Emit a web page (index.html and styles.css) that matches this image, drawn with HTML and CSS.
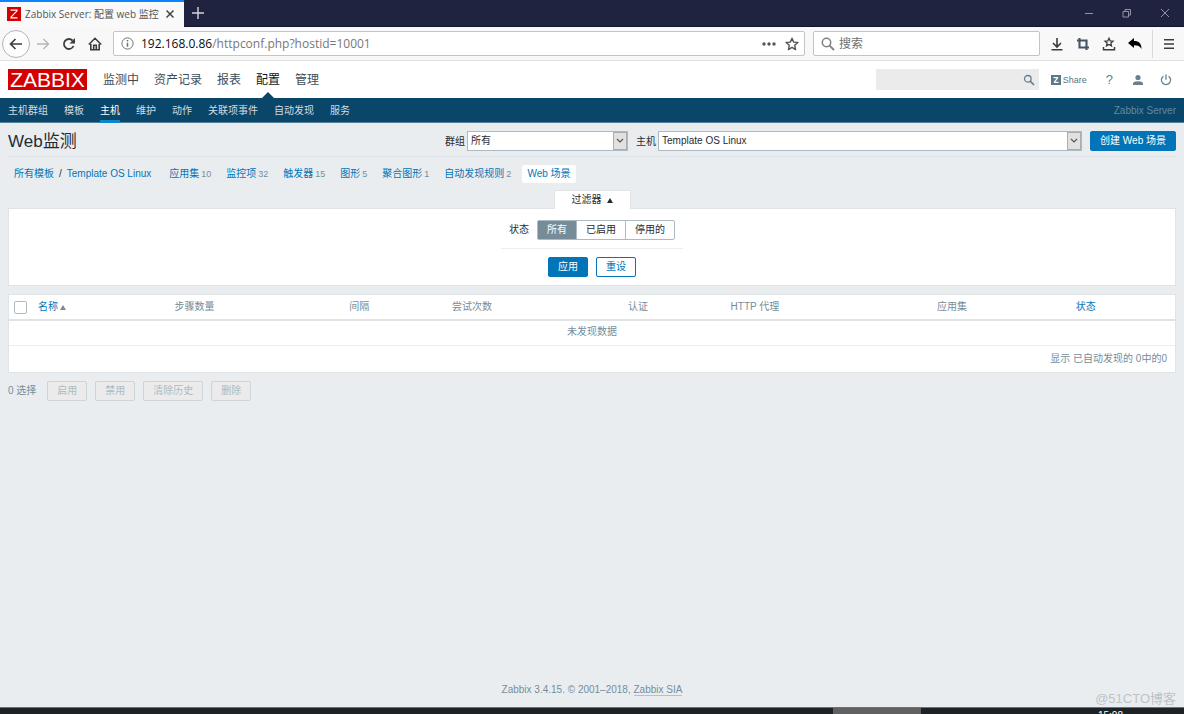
FILE: index.html
```html
<!DOCTYPE html>
<html lang="zh-CN">
<head>
<meta charset="utf-8">
<title>Zabbix Server: 配置 web 监控</title>
<link rel="stylesheet" href="styles.css">
</head>
<body>
<div class="tabstrip">
  <div class="tab">
    <svg class="favicon" width="14" height="14" viewBox="0 0 14 14"><rect width="14" height="14" fill="#d40000"/><path d="M3.500 3.200h6.500v.6L4 10.200v.6h6.500" fill="none" stroke="#fff" stroke-width="1.200"/></svg>
    <span class="tab-title">Zabbix Server: 配置 web 监控</span>
    <button class="icon-btn" aria-label="关闭标签页"><svg width="10" height="10" viewBox="0 0 10 10"><path d="M1.500 1.500l7 7M8.500 1.500l-7 7" stroke="#444" stroke-width="1.500"/></svg></button>
  </div>
  <button class="icon-btn newtab" aria-label="新标签页"><svg width="12" height="12" viewBox="0 0 12 12"><path d="M6 0v12M0 6h12" stroke="#d4d4dc" stroke-width="1.400"/></svg></button>
  <div class="window-controls">
    <button class="icon-btn" aria-label="最小化"><svg width="10" height="10" viewBox="0 0 10 10"><path d="M1 5.500h8" stroke="#9293a4"/></svg></button>
    <button class="icon-btn" aria-label="还原"><svg width="10" height="10" viewBox="0 0 10 10"><path d="M1 3.500h5.500V9H1zM3 3.500v-2h5.500V7h-2" fill="none" stroke="#9293a4"/></svg></button>
    <button class="icon-btn" aria-label="关闭"><svg width="10" height="10" viewBox="0 0 10 10"><path d="M1 1l8 8M9 1L1 9" stroke="#9293a4"/></svg></button>
  </div>
</div>

<div class="toolbar">
  <button class="icon-btn back" aria-label="后退"><svg width="14" height="14" viewBox="0 0 14 14"><path d="M13 7H1.500M6.500 2l-5 5 5 5" fill="none" stroke="#3c3c3e" stroke-width="1.600"/></svg></button>
  <button class="icon-btn tool" aria-label="前进"><svg width="14" height="14" viewBox="0 0 14 14"><path d="M1 7h11.500M7.500 2l5 5-5 5" fill="none" stroke="#b5b5b7" stroke-width="1.400"/></svg></button>
  <button class="icon-btn tool" aria-label="刷新"><svg width="14" height="14" viewBox="0 0 14 14"><path d="M11.500 9A5 5 0 1 1 10.500 3.500" fill="none" stroke="#3c3c3e" stroke-width="1.800"/><path d="M13 1v5.500H7.500z" fill="#3c3c3e"/></svg></button>
  <button class="icon-btn tool" aria-label="主页"><svg width="14" height="14" viewBox="0 0 14 14"><path d="M.8 7.500L7 1.300l6.200 6.200M2.800 7v5.800h8.400V7M5.700 12.500V8.300h2.600v4.200" fill="none" stroke="#3c3c3e" stroke-width="1.600"/></svg></button>
  <div class="urlbar">
    <svg width="13" height="13" viewBox="0 0 13 13"><circle cx="6.500" cy="6.500" r="5.600" fill="none" stroke="#6f6f71"/><path d="M6.500 5.700v4M6.500 3v1.500" stroke="#6f6f71" stroke-width="1.500"/></svg>
    <span class="url"><b>192.168.0.86</b>/httpconf.php?hostid=10001</span>
    <button class="icon-btn" aria-label="页面操作"><svg width="14" height="14" viewBox="0 0 14 14"><g fill="#555"><circle cx="2" cy="7" r="1.700"/><circle cx="7" cy="7" r="1.700"/><circle cx="12" cy="7" r="1.700"/></g></svg></button>
    <button class="icon-btn" aria-label="收藏"><svg width="14" height="14" viewBox="0 0 14 14"><path d="M7 1.200l1.700 3.900 4.200.4-3.200 2.800.9 4.300L7 10.400l-3.600 2.200.9-4.300L1.100 5.500l4.200-.4z" fill="none" stroke="#555" stroke-width="1.400" stroke-linejoin="round"/></svg></button>
  </div>
  <div class="browser-search">
    <svg width="14" height="14" viewBox="0 0 14 14"><circle cx="5.500" cy="5.500" r="4.200" fill="none" stroke="#808082" stroke-width="1.500"/><path d="M8.600 8.600L13 13" stroke="#808082" stroke-width="1.800"/></svg>
    <input type="text" placeholder="搜索" aria-label="搜索">
  </div>
  <div class="toolbar-icons">
    <button class="icon-btn" aria-label="下载"><svg width="14" height="14" viewBox="0 0 14 14"><path d="M7 1v9M3 6l4 4 4-4M1.500 12.800h11" fill="none" stroke="#3c3c3e" stroke-width="1.600"/></svg></button>
    <button class="icon-btn" aria-label="截图"><svg width="14" height="14" viewBox="0 0 14 14"><path d="M1 3.500h9.500V13M3.500 1v9.500H13" fill="none" stroke="#465566" stroke-width="2.100"/></svg></button>
    <button class="icon-btn" aria-label="书签"><svg width="14" height="14" viewBox="0 0 14 14"><path d="M7 1.300l1.200 2.600 2.800.3-2.100 1.900.6 2.800L7 7.500 4.500 8.900l.6-2.800L3 4.200l2.800-.3z" fill="none" stroke="#3c3c3e" stroke-width="1.300"/><path d="M1.500 10v2.800h11V10" fill="none" stroke="#3c3c3e" stroke-width="1.500"/></svg></button>
    <button class="icon-btn" aria-label="撤销"><svg width="14" height="14" viewBox="0 0 14 14"><path d="M0 6l6-5v3c5 0 7.500 2.500 7.500 8C12 9.200 10 8.200 6 8.200V11z" fill="#000"/></svg></button>
    <button class="icon-btn menu" aria-label="菜单"><svg width="12" height="12" viewBox="0 0 12 12"><path d="M1 1.800h10M1 6h10M1 10.200h10" stroke="#3c3c3e" stroke-width="1.500"/></svg></button>
  </div>
</div>

<header class="header">
  <a class="logo" href="#">ZABBIX</a>
  <nav class="main-nav">
    <a href="#">监测中</a><a href="#">资产记录</a><a href="#">报表</a><a href="#" class="active">配置</a><a href="#">管理</a>
  </nav>
  <div class="site-search">
    <input type="text" aria-label="站内搜索">
    <button class="icon-btn" aria-label="执行搜索"><svg width="12" height="12" viewBox="0 0 12 12"><circle cx="4.800" cy="4.800" r="3.300" fill="none" stroke="#668090" stroke-width="1.300"/><path d="M7.200 7.200L11 11" stroke="#668090" stroke-width="1.700"/></svg></button>
  </div>
  <a class="share" href="#"><svg width="10" height="10" viewBox="0 0 10 10"><rect width="10" height="10" fill="#5c7989"/><path d="M2.500 2.600H7L3 7.400h4.500" fill="none" stroke="#fff" stroke-width="1.100" stroke-linejoin="bevel"/></svg>Share</a>
  <a class="help" href="#">?</a>
  <a class="user" href="#" aria-label="用户"><svg width="12" height="12" viewBox="0 0 12 12"><circle cx="6" cy="3.500" r="2.600" fill="#668090"/><path d="M1 11V9.500C1 8 3 7.200 6 7.200s5 .8 5 2.300V11z" fill="#668090"/></svg></a>
  <a class="power" href="#" aria-label="退出"><svg width="12" height="12" viewBox="0 0 12 12"><path d="M3.400 2.200a4.600 4.600 0 1 0 5.200 0M6 .5v5.300" fill="none" stroke="#668090" stroke-width="1.300"/></svg></a>
</header>

<nav class="sub-nav">
  <a href="#">主机群组</a><a href="#">模板</a><a href="#" class="active">主机</a><a href="#">维护</a><a href="#">动作</a><a href="#">关联项事件</a><a href="#">自动发现</a><a href="#">服务</a>
  <span class="server">Zabbix Server</span>
</nav>

<main class="main">
  <div class="title-row">
    <h1>Web监测</h1>
    <label for="group">群组</label>
    <div class="select group"><select id="group"><option>所有</option></select><span class="arrow"><svg width="8" height="6" viewBox="0 0 8 6"><path d="M1 1l3 3 3-3" fill="none" stroke="#555" stroke-width="1.200"/></svg></span></div>
    <label for="host">主机</label>
    <div class="select host"><select id="host"><option>Template OS Linux</option></select><span class="arrow"><svg width="8" height="6" viewBox="0 0 8 6"><path d="M1 1l3 3 3-3" fill="none" stroke="#555" stroke-width="1.200"/></svg></span></div>
    <button class="btn primary create">创建 Web 场景</button>
  </div>

  <div class="crumbs">
    <div class="path"><a href="#">所有模板</a><span>/</span><a href="#">Template OS Linux</a></div>
    <div><a href="#">应用集</a><sup>10</sup></div>
    <div><a href="#">监控项</a><sup>32</sup></div>
    <div><a href="#">触发器</a><sup>15</sup></div>
    <div><a href="#">图形</a><sup>5</sup></div>
    <div><a href="#">聚合图形</a><sup>1</sup></div>
    <div><a href="#">自动发现规则</a><sup>2</sup></div>
    <a class="current" href="#">Web 场景</a>
  </div>

  <button class="filter-tab">过滤器<svg width="6" height="5" viewBox="0 0 6 5"><path d="M3 0l3 5H0z" fill="#1f2c33"/></svg></button>
  <form class="filter">
    <div class="filter-row" role="group" aria-label="状态">
      <span>状态</span>
      <div class="segments">
        <label><input type="radio" name="status" checked>所有</label><label><input type="radio" name="status">已启用</label><label><input type="radio" name="status">停用的</label>
      </div>
    </div>
    <div class="filter-actions">
      <button type="button" class="btn primary">应用</button>
      <button type="button" class="btn">重设</button>
    </div>
  </form>

  <table class="list">
    <colgroup><col class="c-check"><col class="c-name"><col class="c-steps"><col class="c-interval"><col class="c-attempts"><col class="c-auth"><col class="c-proxy"><col class="c-app"><col></colgroup>
    <thead><tr>
      <th><input type="checkbox" aria-label="全选"></th>
      <th><a href="#">名称<svg width="6" height="5" viewBox="0 0 6 5"><path d="M3 0l3 5H0z" fill="#768d99"/></svg></a></th>
      <th>步骤数量</th><th>间隔</th><th>尝试次数</th><th>认证</th><th>HTTP 代理</th><th>应用集</th><th><a href="#">状态</a></th>
    </tr></thead>
    <tbody>
      <tr><td class="empty" colspan="9">未发现数据</td></tr>
      <tr><td class="total" colspan="9">显示 已自动发现的 0中的0</td></tr>
    </tbody>
  </table>

  <div class="bulk">
    <span>0 选择</span>
    <button class="btn" disabled>启用</button>
    <button class="btn" disabled>禁用</button>
    <button class="btn" disabled>清除历史</button>
    <button class="btn" disabled>删除</button>
  </div>
</main>

<footer class="footer">Zabbix 3.4.15. © 2001–2018, <a href="#">Zabbix SIA</a></footer>
<div class="watermark">@51CTO博客</div>
<div class="taskbar"><span class="task"></span><span class="clock">15:08</span></div>
</body>
</html>
```

FILE: styles.css
```css
* { box-sizing: border-box; }

body {
  margin: 0;
  min-height: 100vh;
  display: flex;
  flex-direction: column;
  position: relative;
  background: #e9edf0;
  color: #1f2c33;
  font: 10px/14px "Liberation Sans", "Noto Sans CJK SC", sans-serif;
}

a { color: #0275b8; text-decoration: none; }
button, input, select { font: inherit; color: inherit; margin: 0; }
svg { display: block; flex: none; }

.icon-btn {
  display: flex;
  align-items: center;
  justify-content: center;
  padding: 0;
  border: 0;
  background: none;
}

/* Browser tabs */
.tabstrip {
  display: flex;
  align-items: stretch;
  height: 27px;
  background: #202340;
  border-bottom: 1px solid #12132c;
}
.tab {
  display: flex;
  align-items: center;
  width: 184px;
  height: 27px;
  padding: 0 9px 2px 7px;
  border-top: 2px solid #0a84ff;
  background: #f9f9fa;
  color: #555;
  font-family: "Open Sans", "Noto Sans CJK SC", sans-serif;
}
.tab-title { flex: 1; margin-left: 4px; white-space: nowrap; }
.newtab { width: 28px; }
.window-controls {
  display: flex;
  gap: 28px;
  margin-left: auto;
  padding-right: 14px;
}

/* Browser toolbar */
.toolbar {
  display: flex;
  align-items: center;
  height: 34px;
  padding-left: 2px;
  background: #f8f8f9;
  border-bottom: 1px solid #e0e0e1;
}
.back {
  width: 28px;
  height: 28px;
  border: 1px solid #b4b4b6;
  border-radius: 50%;
  background: #fdfdfd;
}
.tool { width: 26px; }
.urlbar, .browser-search {
  display: flex;
  align-items: center;
  height: 25px;
  border: 1px solid #c4c4c6;
  border-radius: 2px;
  background: #fff;
  font: 12px/16px "Open Sans", "Noto Sans CJK SC", sans-serif;
}
.urlbar { flex: 1; gap: 9px; margin-left: 5px; padding: 0 5px 0 7px; }
.url { flex: 1; margin-left: -2px; color: #77777a; white-space: nowrap; }
.url b { color: #0c0c0d; font-weight: 400; }
.browser-search { width: 227px; gap: 4px; margin-left: 8px; padding: 0 7px; }
.browser-search input { flex: 1; min-width: 0; padding: 0; border: 0; outline: 0; }
.browser-search input::placeholder { color: #707072; opacity: 1; }
.toolbar-icons { display: flex; align-items: center; gap: 12px; margin-left: 10px; }
.menu {
  width: 32px;
  height: 28px;
  margin-left: -2px;
  border-left: 1px solid #d8d8da;
}

/* Application header */
.header {
  display: flex;
  align-items: center;
  height: 37px;
  padding: 0 12px 0 8px;
  background: #fff;
}
.logo {
  width: 79px;
  height: 21px;
  background: #d40000;
  color: #fff;
  font-size: 21px;
  line-height: 22px;
  text-align: center;
}
.main-nav {
  display: flex;
  align-self: stretch;
  gap: 15px;
  margin-left: 16px;
  font-size: 12px;
  line-height: 39px;
}
.main-nav a { position: relative; height: 37px; color: #3c4d57; }
.main-nav .active { color: #0c161b; }
.main-nav .active::after {
  content: "";
  position: absolute;
  left: 50%;
  bottom: 0;
  margin-left: -6px;
  border: 6px solid transparent;
  border-top: 0;
  border-bottom-color: #0a466a;
}
.site-search {
  display: flex;
  width: 163px;
  height: 21px;
  margin-left: auto;
  padding-right: 4px;
  background: #ebebeb;
}
.site-search input { flex: 1; min-width: 0; padding: 0 4px; border: 0; background: none; outline: 0; }
.share { display: flex; align-items: center; gap: 2px; margin-left: 12px; color: #5c7380; font-size: 9px; }
.help { margin-left: 19px; color: #668090; font-size: 13px; }
.user { margin-left: 19px; }
.power { margin-left: 16px; }

.sub-nav {
  display: flex;
  gap: 16px;
  height: 25px;
  padding: 0 8px;
  background: #0a466a;
  border-bottom: 1px solid #54809a;
  line-height: 25px;
}
.sub-nav a { height: 25px; color: #d0dde4; }
.sub-nav .active { color: #fff; border-bottom: 3px solid #0f86cc; }
.server { margin-left: auto; color: #5f8aa1; }

/* Page content */
.main { flex: 1; padding: 0 8px; }
.title-row {
  display: flex;
  align-items: center;
  height: 34px;
  padding-top: 2px;
  border-bottom: 1px solid #dde2e6;
}
h1 { flex: 1; margin: 0; padding-top: 2px; font-size: 17px; line-height: 24px; font-weight: 400; }
.title-row label { padding-top: 2px; }
.select { position: relative; height: 20px; margin: 0 8px 0 2px; }
.select select {
  width: 100%;
  height: 20px;
  padding: 0 18px 0 3px;
  border: 1px solid #acbbc2;
  border-radius: 0;
  background: #fff;
  appearance: none;
}
.arrow {
  position: absolute;
  top: 1px;
  right: 1px;
  display: flex;
  align-items: center;
  justify-content: center;
  width: 14px;
  height: 18px;
  border: 1px solid #adadad;
  background: #e1e1e1;
  pointer-events: none;
}
.group { width: 161px; }
.host { width: 424px; }

.btn {
  height: 20px;
  padding: 0 9px;
  border: 1px solid #0275b8;
  border-radius: 2px;
  background: #fff;
  color: #0275b8;
  line-height: 18px;
  white-space: nowrap;
}
.primary { background: #0275b8; color: #fff; }
.btn:disabled { border-color: #ccd5d9; background: #ebebeb; color: #acbbc2; }

.crumbs {
  display: flex;
  align-items: center;
  gap: 15px;
  height: 33px;
  padding: 0 5px;
}
.path { display: flex; gap: 5px; padding: 0 3px 0 1px; }
.crumbs sup { margin-left: 2px; color: #768d99; font-size: 9px; line-height: 14px; vertical-align: baseline; }
.current {
  margin-left: -4px;
  padding: 2px 5px;
  border-radius: 2px;
  background: #fff;
}

.filter-tab {
  position: relative;
  display: flex;
  align-items: center;
  justify-content: center;
  gap: 5px;
  width: 77px;
  height: 19px;
  margin: 0 auto -1px;
  padding: 0;
  border: 1px solid #dfe4e7;
  border-bottom: 0;
  background: #fff;
}
.filter {
  display: flex;
  flex-direction: column;
  align-items: center;
  margin-bottom: 8px;
  padding: 11px 0 8px;
  border: 1px solid #dfe4e7;
  background: #fff;
}
.filter-row {
  display: flex;
  align-items: center;
  gap: 8px;
  padding: 0 8px 8px;
  border-bottom: 1px solid #ebeef0;
}
.segments {
  display: flex;
  height: 20px;
  border: 1px solid #acbbc2;
  border-radius: 2px;
}
.segments label { padding: 0 9px; line-height: 18px; }
.segments label + label { border-left: 1px solid #acbbc2; }
.segments label:has(:checked) { background: #768d99; color: #fff; }
.segments input { position: absolute; opacity: 0; pointer-events: none; }
.filter-actions { display: flex; gap: 8px; padding-top: 8px; }

.list {
  width: 100%;
  table-layout: fixed;
  border: 1px solid #dfe4e7;
  border-spacing: 0;
  background: #fff;
  color: #768d99;
}
.list th { height: 26px; padding: 0 5px; border-bottom: 2px solid #dfe4e7; font-weight: 400; text-align: left; }
.list td { height: 25px; padding: 0 8px; }
.list th a { display: flex; align-items: center; gap: 2px; }
.list input {
  display: block;
  width: 13px;
  height: 13px;
  border: 1px solid #acbbc2;
  border-radius: 2px;
  background: #fff;
  appearance: none;
}
.list .empty { padding-bottom: 2px; border-bottom: 1px solid #ebeef0; text-align: center; }
.list .total { height: 26px; text-align: right; }
.c-check { width: 24px; }
.c-name { width: 11.7%; }
.c-steps { width: 15%; }
.c-interval { width: 8.8%; }
.c-attempts { width: 15.1%; }
.c-auth { width: 8.8%; }
.c-proxy { width: 17.7%; }
.c-app { width: 11.9%; }

.bulk { display: flex; align-items: center; gap: 8px; margin-top: 8px; color: #768d99; }
.bulk span { margin-right: 3px; }

.footer { padding-bottom: 10px; color: #768d99; text-align: center; }
.footer a { color: #768d99; border-bottom: 1px solid #b4c0c7; }
.watermark {
  position: absolute;
  right: 8px;
  bottom: 7px;
  color: #bfc3c6;
  font-size: 13px;
  line-height: 16px;
}
.taskbar {
  display: flex;
  justify-content: flex-end;
  gap: 177px;
  height: 7px;
  padding-right: 61px;
  border-top: 1px solid #6d7376;
  background: #1d2227;
  color: #fff;
  overflow: hidden;
}
.task { width: 88px; background: #616161; }
.clock { padding-top: 1px; }
```
